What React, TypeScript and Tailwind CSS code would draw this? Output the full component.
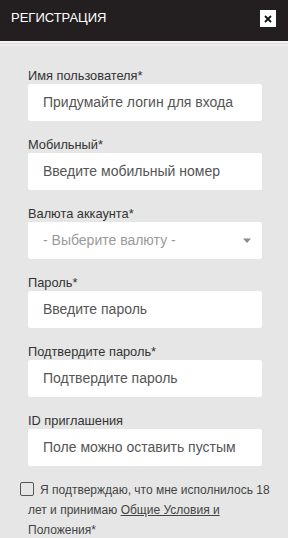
import React from "react";

const font = { fontFamily: '"Liberation Sans", Arial, sans-serif' };

function Field({ label, placeholder, select }: { label: string; placeholder: string; select?: boolean }) {
  return (
    <div className="mb-[15px]">
      <div className="text-[12.8px] leading-[17px] text-[#333]">{label}</div>
      <div className="relative h-[37px] bg-white rounded-[2px] flex items-center pl-[15px]">
        <span className={select ? "text-[14px] text-[#9a9a9a]" : "text-[14px] text-[#555]"}>{placeholder}</span>
        {select && (
          <svg className="absolute right-[10px] top-[16px]" width="10" height="6" viewBox="0 0 10 6">
            <path d="M1 0.5 L9 0.5 L5 5 Z" fill="#8a8a8a" />
          </svg>
        )}
      </div>
    </div>
  );
}

export default function App() {
  return (
    <div className="w-[288px] h-[538px] overflow-hidden bg-[#e6e6e6]" style={font}>
      <div className="h-[41px] bg-[#231f20] flex items-center justify-between pl-[11px] pr-[12px]">
        <span className="text-white text-[13px] -mt-[5px]">РЕГИСТРАЦИЯ</span>
        <div className="w-[16px] h-[17px] bg-white flex items-center justify-center -mt-[4px]">
          <svg width="8" height="8" viewBox="0 0 8 8">
            <path d="M1 1 L7 7 M7 1 L1 7" stroke="#111" strokeWidth="1.8" />
          </svg>
        </div>
      </div>
      <div className="h-[2px] bg-[#f4f4f4]" />
      <div className="h-[1px] bg-[#dcdcdc]" />
      <div className="h-[2px] bg-[#efefef]" />
      <div className="pt-[21px] pl-[28px] pr-[26px]">
        <Field label="Имя пользователя*" placeholder="Придумайте логин для входа" />
        <Field label="Мобильный*" placeholder="Введите мобильный номер" />
        <Field label="Валюта аккаунта*" placeholder="- Выберите валюту -" select />
        <Field label="Пароль*" placeholder="Введите пароль" />
        <Field label="Подтвердите пароль*" placeholder="Подтвердите пароль" />
        <Field label="ID приглашения" placeholder="Поле можно оставить пустым" />
      </div>
      <div className="pl-[28px] pr-[14px] -mt-[1px]">
        <p className="text-[12px] leading-[20px] text-[#444]">
          <span className="inline-block align-[-2px] w-[14px] h-[14px] border-[1.5px] border-[#555] rounded-[2px] ml-[-8px] mr-[6px]" />
          Я подтверждаю, что мне исполнилось 18 лет и принимаю{" "}
          <span className="underline">Общие Условия и</span> Положения*
        </p>
      </div>
    </div>
  );
}
